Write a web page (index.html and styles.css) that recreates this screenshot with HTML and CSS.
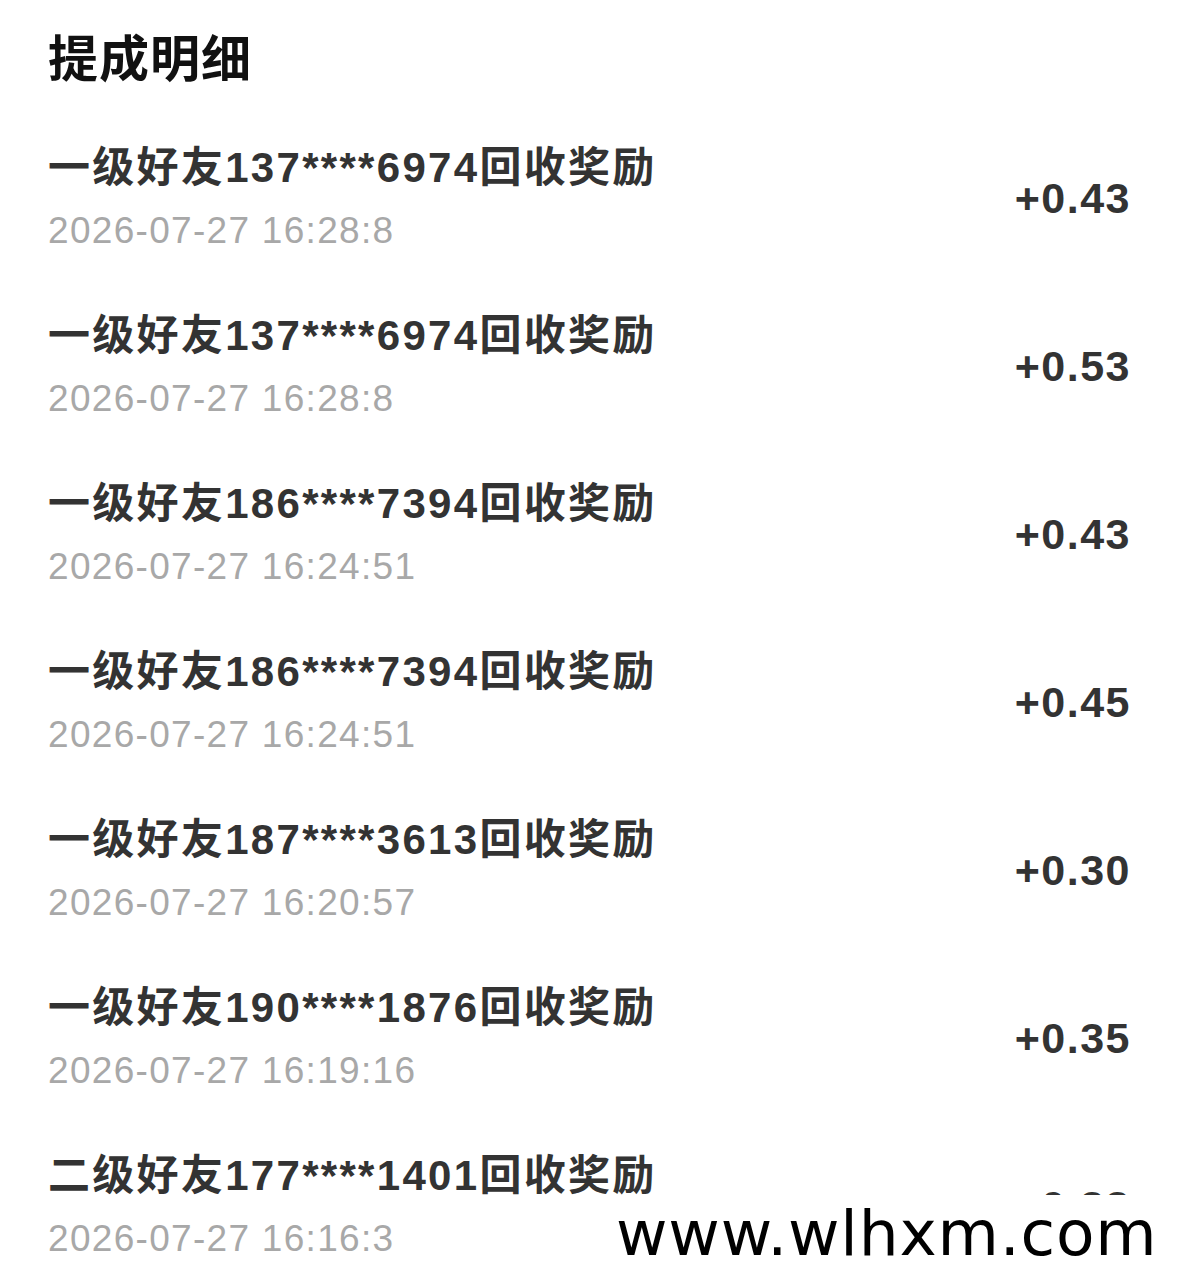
FILE: index.html
```html
<!DOCTYPE html>
<html lang="zh-CN">
<head>
<meta charset="utf-8">
<title>提成明细</title>
<link rel="stylesheet" href="styles.css">
</head>
<body>
<div class="page">
  <h1 class="title">提成明细</h1>
  <ul class="list">
    <li class="row"><div class="info"><div class="name">一级好友137****6974回收奖励</div><div class="time">2026-07-27 16:28:8</div></div><div class="amount">+0.43</div></li>
    <li class="row"><div class="info"><div class="name">一级好友137****6974回收奖励</div><div class="time">2026-07-27 16:28:8</div></div><div class="amount">+0.53</div></li>
    <li class="row"><div class="info"><div class="name">一级好友186****7394回收奖励</div><div class="time">2026-07-27 16:24:51</div></div><div class="amount">+0.43</div></li>
    <li class="row"><div class="info"><div class="name">一级好友186****7394回收奖励</div><div class="time">2026-07-27 16:24:51</div></div><div class="amount">+0.45</div></li>
    <li class="row"><div class="info"><div class="name">一级好友187****3613回收奖励</div><div class="time">2026-07-27 16:20:57</div></div><div class="amount">+0.30</div></li>
    <li class="row"><div class="info"><div class="name">一级好友190****1876回收奖励</div><div class="time">2026-07-27 16:19:16</div></div><div class="amount">+0.35</div></li>
    <li class="row"><div class="info"><div class="name">二级好友177****1401回收奖励</div><div class="time">2026-07-27 16:16:3</div></div><div class="amount">+0.33</div></li>
  </ul>
  <div class="watermark">www.wlhxm.com</div>
</div>
</body>
</html>
```
FILE: styles.css
```css
html, body {
  margin: 0;
  padding: 0;
  background: #ffffff;
}
.page {
  position: relative;
  width: 1179px;
  height: 1273px;
  overflow: hidden;
  font-family: "Liberation Sans", Arial, "Noto Sans CJK SC", sans-serif;
}
.title {
  margin: 0;
  padding: 25px 0 0 48px;
  height: 75px;
  font-size: 50px;
  line-height: 60px;
  font-weight: 700;
  letter-spacing: 1px;
  color: #111111;
  font-family: "Noto Sans CJK SC", sans-serif;
}
.list {
  list-style: none;
  margin: 0;
  padding: 0;
}
.row {
  display: flex;
  align-items: center;
  justify-content: space-between;
  height: 168px;
  box-sizing: border-box;
  padding: 43px 48px 12px 48px;
}
.info {
  display: flex;
  flex-direction: column;
  gap: 13px;
}
.name {
  font-size: 42px;
  line-height: 50px;
  font-weight: 700;
  color: #333333;
  letter-spacing: 2.3px;
}
.time {
  font-size: 37px;
  line-height: 50px;
  color: #a8a8a8;
  letter-spacing: 1.3px;
}
.amount {
  font-size: 43px;
  line-height: 50px;
  font-weight: 700;
  color: #333333;
  letter-spacing: 1.5px;
  margin-top: -4px;
}
.watermark {
  position: absolute;
  left: 600px;
  right: 0;
  top: 1195px;
  bottom: 0;
  background: #ffffff;
  font-family: "DejaVu Sans", sans-serif;
  font-size: 63px;
  line-height: 78px;
  letter-spacing: 0.8px;
  color: #000000;
  padding-left: 16px;
  white-space: nowrap;
}
```
